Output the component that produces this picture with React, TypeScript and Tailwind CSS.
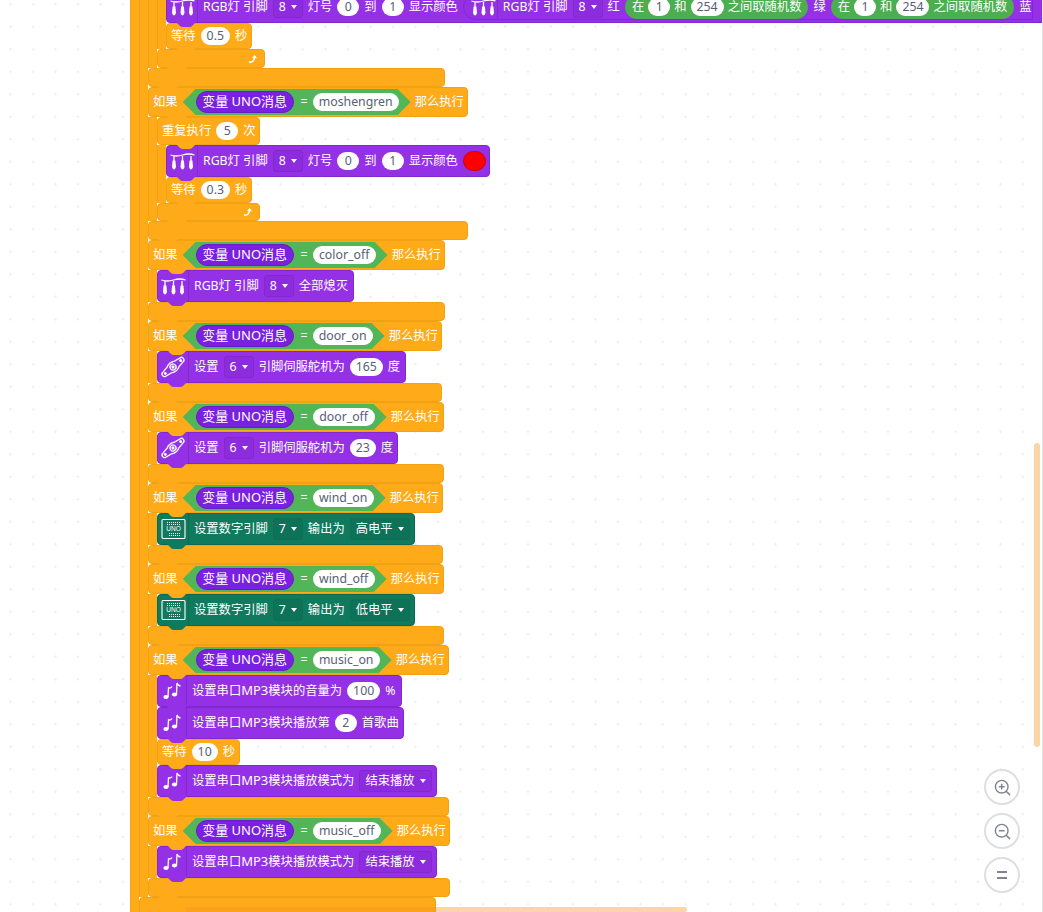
import type { ReactNode } from "react";
import { ZoomIn, ZoomOut } from "lucide-react";

const ORANGE = "bg-[#ffab19] border border-[#f0a114]";
const PURPLE = "bg-[#9431e6] border border-[#8228cc]";
const TEAL = "bg-[#0f7a5d] border border-[#0c6a50]";

function Bump({ fill, left }: { fill: string; left: string }) {
  return (
    <svg className={`absolute top-full -mt-px z-10 ${left} ${fill}`} width="22" height="7" viewBox="0 0 22 7">
      <path d="M0 0 L5 5 Q6 6 8 6 H14 Q16 6 17 5 L22 0 Z" />
    </svg>
  );
}

function RgbIcon() {
  return (
    <svg width="25" height="21" viewBox="0 0 25 21" fill="none" stroke="white" strokeWidth="1.3">
      <path d="M0.5 4 Q6 6 12.5 4 T24.5 4" />
      <path d="M4 5 V10 M12.5 5 V10 M21 5 V10" />
      <path d="M2.6 9.5 H5.4 L6 16 Q4 21 2 16 Z M11.1 9.5 H13.9 L14.5 16 Q12.5 21 10.5 16 Z M19.6 9.5 H22.4 L23 16 Q21 21 19 16 Z" fill="white" stroke="none" />
    </svg>
  );
}

function ServoIcon() {
  return (
    <svg width="28" height="28" viewBox="0 0 28 28" fill="none" stroke="white" strokeWidth="1.3">
      <g transform="rotate(-40 14 14)">
        <path d="M0.5 14 Q0.5 11.5 3 11.5 L9 10.5 Q14 7.5 19 10.5 L25 11.5 Q27.5 11.5 27.5 14 Q27.5 16.5 25 16.5 L19 17.5 Q14 20.5 9 17.5 L3 16.5 Q0.5 16.5 0.5 14 Z" />
        <circle cx="14" cy="14" r="3" />
        <circle cx="14" cy="14" r="0.9" fill="white" />
        <circle cx="4" cy="14" r="0.8" fill="white" />
        <circle cx="24" cy="14" r="0.8" fill="white" />
      </g>
    </svg>
  );
}

function UnoIcon() {
  return (
    <svg width="25" height="22" viewBox="0 0 25 22" fill="none" stroke="white">
      <rect x="1" y="1.5" width="23" height="19" rx="1" strokeWidth="1.1" />
      <path d="M6 4.5 H20 M6 6.5 H20 M8 15.5 H20 M8 17.5 H20" strokeWidth="1.2" strokeDasharray="1 1" />
      <text x="12.5" y="13" textAnchor="middle" fontSize="6.5" fill="white" stroke="none" fontFamily="Liberation Sans, sans-serif">UNO</text>
    </svg>
  );
}

function MusicIcon() {
  return (
    <svg width="18" height="18" viewBox="0 0 18 18" fill="white" stroke="white">
      <ellipse cx="3" cy="15" rx="2.6" ry="2.1" stroke="none" />
      <ellipse cx="11.5" cy="12.5" rx="2.6" ry="2.1" stroke="none" />
      <path d="M5 15 L5.5 6 Q8 6.2 9 4.5" fill="none" strokeWidth="1.3" />
      <path d="M13.5 12.5 L14 1 Q15 3.5 17.5 4" fill="none" strokeWidth="1.3" />
    </svg>
  );
}

function Caret() {
  return <span className="ml-[5px] h-0 w-0 border-x-[3.5px] border-t-[4px] border-x-transparent border-t-white" />;
}

function Num({ children }: { children: ReactNode }) {
  return (
    <span className="flex h-[18px] min-w-[22px] items-center justify-center rounded-full bg-white px-[6px] text-[#575e75]">
      {children}
    </span>
  );
}

function Drop({ children, teal }: { children: ReactNode; teal?: boolean }) {
  return (
    <span
      className={
        "flex h-[22px] items-center rounded-[3px] border px-[5px] " +
        (teal ? "border-[#0d6f54] bg-[#0e7258]" : "border-[#8228cc] bg-[#8d2cdc]")
      }
    >
      {children}
      <Caret />
    </span>
  );
}

// stack block with icon cell on the left
function Stat({ icon, tone, w, cell, children }: { icon: ReactNode; tone: string; w: string; cell?: string; children: ReactNode }) {
  const teal = tone === TEAL;
  return (
    <div className={`relative flex h-[32px] items-center gap-[5px] rounded-[4px] text-white ${tone} ${w}`}>
      <span className={`flex h-full shrink-0 items-center justify-center border-r ${cell ?? "w-[31px]"} ${teal ? "border-[#0c6a50]" : "border-[#8228cc]"}`}>
        {icon}
      </span>
      {children}
      <Bump left="left-[8px]" fill={teal ? "fill-[#0f7a5d]" : "fill-[#9431e6]"} />
    </div>
  );
}

function Wait({ value, w }: { value: string; w: string }) {
  return (
    <div className={`relative flex h-[26px] items-center gap-[5px] rounded-[4px] pl-[4px] text-white ${ORANGE} ${w}`}>
      <span>等待</span>
      <Num>{value}</Num>
      <span>秒</span>
      <Bump left="left-[8px]" fill="fill-[#ffab19]" />
    </div>
  );
}

function Arm({ children }: { children: ReactNode }) {
  return (
    <div className="flex">
      <div className="w-[9px] shrink-0 border-l border-[#f0a114] bg-[#ffab19]" />
      <div className="min-w-0 flex-1">{children}</div>
    </div>
  );
}

function Foot({ w, h, children }: { w: string; h: string; children?: ReactNode }) {
  return (
    <div className={`relative flex items-center justify-end rounded-[4px] pr-[6px] ${ORANGE} ${w} ${h}`}>
      {children}
      <Bump left="left-[8px]" fill="fill-[#ffab19]" />
    </div>
  );
}

function LoopArrow() {
  return (
    <svg width="10" height="10" viewBox="0 0 10 10" fill="none" stroke="white" strokeWidth="1.6">
      <path d="M1 8 Q6 9 6.5 3" />
      <path d="M4 4 L6.7 1 L9 4.2 Z" fill="white" stroke="none" />
    </svg>
  );
}

function Repeat({ times, w, children }: { times: string; w: string; children: ReactNode }) {
  return (
    <div className={`relative flex h-[28px] items-center gap-[5px] rounded-[4px] pl-[4px] text-white ${ORANGE} ${w}`}>
      <span>重复执行</span>
      <Num>{times}</Num>
      <span>次</span>
      {children}
    </div>
  );
}

function IfHead({ msg, w, input }: { msg: string; w: string; input: string }) {
  return (
    <div className={`relative flex h-[30px] items-center rounded-[4px] pl-[4px] text-white ${ORANGE} ${w}`}>
      <span>如果</span>
      <div className="ml-[5px] flex h-[26px] items-center bg-[#52b557] pl-[13px] pr-[12px] [clip-path:polygon(13px_0,calc(100%-13px)_0,100%_50%,calc(100%-13px)_100%,13px_100%,0_50%)]">
        <span className="flex h-[22px] w-[98px] items-center justify-center rounded-full border border-[#6a1cc4] bg-[#7a20e0] text-[13px] text-white">
          变量 UNO消息
        </span>
        <span className="ml-[7px] mr-[5px]">=</span>
        <span className={`flex h-[18px] items-center justify-center rounded-full bg-white text-[#575e75] ${input}`}>
          {msg}
        </span>
      </div>
      <span className="ml-[4px]">那么执行</span>
      <Bump left="left-[17px]" fill="fill-[#ffab19]" />
    </div>
  );
}

function RgbHead() {
  return (
    <>
      <span>RGB灯 引脚</span>
      <Drop>8</Drop>
    </>
  );
}

function LedRange() {
  return (
    <>
      <RgbHead />
      <span>灯号</span>
      <Num>0</Num>
      <span>到</span>
      <Num>1</Num>
      <span>显示颜色</span>
    </>
  );
}

function RandomPill() {
  return (
    <span className="flex h-[24px] shrink-0 items-center gap-[4px] rounded-full bg-[#4cae50] px-[7px]">
      <span>在</span>
      <Num>1</Num>
      <span>和</span>
      <Num>254</Num>
      <span>之间取随机数</span>
    </span>
  );
}

function Mp3Label({ rest }: { rest: string }) {
  return (
    <span>
      设置串口<span className="text-[13px]">MP3</span>
      {rest}
    </span>
  );
}

export default function App() {
  return (
    <div className="relative h-[912px] w-[1043px] overflow-hidden border-r border-[#e4e4e4] bg-white bg-[radial-gradient(circle,#efefef_1px,transparent_1.2px)] bg-[size:22.5px_22.5px] bg-[position:-0.75px_-7px] font-['Noto_Sans','Noto_Sans_CJK_SC',sans-serif] text-[12.3px] whitespace-nowrap">
      <div className="-mt-[9px] ml-[130px]">
        <Arm>
          <Arm>
            <Arm>
              <Arm>
                <Stat icon={<RgbIcon />} tone={PURPLE} w="w-[900px]">
                  <LedRange />
                  <span className="flex h-[26px] shrink-0 items-center gap-[5px] rounded-l-full border border-[#8228cc] bg-[#9431e6] pl-[7px]">
                    <span className="flex h-full w-[27px] items-center border-r border-[#8228cc]">
                      <RgbIcon />
                    </span>
                    <RgbHead />
                    <span>红</span>
                    <RandomPill />
                    <span>绿</span>
                    <RandomPill />
                    <span>蓝</span>
                  </span>
                </Stat>
                <Wait value="0.5" w="w-[86px]" />
              </Arm>
              <Foot w="w-[108px]" h="h-[19px]">
                <LoopArrow />
              </Foot>
            </Arm>
            <Foot w="w-[297px]" h="h-[19px]" />

            <IfHead msg="moshengren" w="w-[320px]" input="w-[86px]" />
            <Arm>
              <Repeat times="5" w="w-[103px]">
                <Bump left="left-[17px]" fill="fill-[#ffab19]" />
              </Repeat>
              <Arm>
                <Stat icon={<RgbIcon />} tone={PURPLE} w="w-[324px]">
                  <LedRange />
                  <span className="h-[20px] w-[23px] rounded-full border border-[#d80000] bg-[#ff0000]" />
                </Stat>
                <Wait value="0.3" w="w-[86px]" />
              </Arm>
              <Foot w="w-[103px]" h="h-[18px]">
                <LoopArrow />
              </Foot>
            </Arm>
            <Foot w="w-[320px]" h="h-[19px]" />

            <IfHead msg="color_off" w="w-[297px]" input="w-[63px]" />
            <Arm>
              <Stat icon={<RgbIcon />} tone={PURPLE} w="w-[197px]">
                <RgbHead />
                <span>全部熄灭</span>
              </Stat>
            </Arm>
            <Foot w="w-[297px]" h="h-[19px]" />

            <IfHead msg="door_on" w="w-[294px]" input="w-[60px]" />
            <Arm>
              <Stat icon={<ServoIcon />} tone={PURPLE} w="w-[249px]">
                <span>设置</span>
                <Drop>6</Drop>
                <span>引脚伺服舵机为</span>
                <Num>165</Num>
                <span>度</span>
              </Stat>
            </Arm>
            <Foot w="w-[294px]" h="h-[19px]" />

            <IfHead msg="door_off" w="w-[296px]" input="w-[62px]" />
            <Arm>
              <Stat icon={<ServoIcon />} tone={PURPLE} w="w-[241px]">
                <span>设置</span>
                <Drop>6</Drop>
                <span>引脚伺服舵机为</span>
                <Num>23</Num>
                <span>度</span>
              </Stat>
            </Arm>
            <Foot w="w-[296px]" h="h-[19px]" />

            <IfHead msg="wind_on" w="w-[295px]" input="w-[61px]" />
            <Arm>
              <Stat icon={<UnoIcon />} tone={TEAL} w="w-[258px]">
                <span>设置数字引脚</span>
                <Drop teal>7</Drop>
                <span>输出为</span>
                <Drop teal>高电平</Drop>
              </Stat>
            </Arm>
            <Foot w="w-[295px]" h="h-[19px]" />

            <IfHead msg="wind_off" w="w-[296px]" input="w-[62px]" />
            <Arm>
              <Stat icon={<UnoIcon />} tone={TEAL} w="w-[258px]">
                <span>设置数字引脚</span>
                <Drop teal>7</Drop>
                <span>输出为</span>
                <Drop teal>低电平</Drop>
              </Stat>
            </Arm>
            <Foot w="w-[296px]" h="h-[19px]" />

            <IfHead msg="music_on" w="w-[301px]" input="w-[67px]" />
            <Arm>
              <Stat icon={<MusicIcon />} tone={PURPLE} w="w-[245px]" cell="w-[29px]">
                <Mp3Label rest="模块的音量为" />
                <Num>100</Num>
                <span>%</span>
              </Stat>
              <Stat icon={<MusicIcon />} tone={PURPLE} w="w-[247px]" cell="w-[29px]">
                <Mp3Label rest="模块播放第" />
                <Num>2</Num>
                <span>首歌曲</span>
              </Stat>
              <Wait value="10" w="w-[83px]" />
              <Stat icon={<MusicIcon />} tone={PURPLE} w="w-[280px]" cell="w-[29px]">
                <Mp3Label rest="模块播放模式为" />
                <Drop>结束播放</Drop>
              </Stat>
            </Arm>
            <Foot w="w-[301px]" h="h-[19px]" />

            <IfHead msg="music_off" w="w-[302px]" input="w-[68px]" />
            <Arm>
              <Stat icon={<MusicIcon />} tone={PURPLE} w="w-[280px]" cell="w-[29px]">
                <Mp3Label rest="模块播放模式为" />
                <Drop>结束播放</Drop>
              </Stat>
            </Arm>
            <Foot w="w-[302px]" h="h-[19px]" />
          </Arm>
          <Foot w="w-[297px]" h="h-[20px]" />
        </Arm>
      </div>

      {/* scrollbars */}
      <div className="absolute left-[1034px] top-[443px] h-[304px] w-[6px] rounded-full bg-[#f7941d]/40" />
      <div className="absolute left-[185px] top-[907px] h-[5px] w-[502px] rounded-full bg-[#f7941d]/40" />

      {/* zoom controls */}
      <div className="absolute left-[984px] top-[769px] flex flex-col gap-[8px] text-[#7f8490]">
        <button className="flex size-[36px] items-center justify-center rounded-full border-2 border-[#dfdfdf] bg-white">
          <ZoomIn size={19} strokeWidth={1.8} />
        </button>
        <button className="flex size-[36px] items-center justify-center rounded-full border-2 border-[#dfdfdf] bg-white">
          <ZoomOut size={19} strokeWidth={1.8} />
        </button>
        <button className="flex size-[36px] flex-col items-center justify-center gap-[4px] rounded-full border-2 border-[#dfdfdf] bg-white">
          <span className="h-[2px] w-[10px] bg-[#7f8490]" />
          <span className="h-[2px] w-[10px] bg-[#7f8490]" />
        </button>
      </div>
    </div>
  );
}
